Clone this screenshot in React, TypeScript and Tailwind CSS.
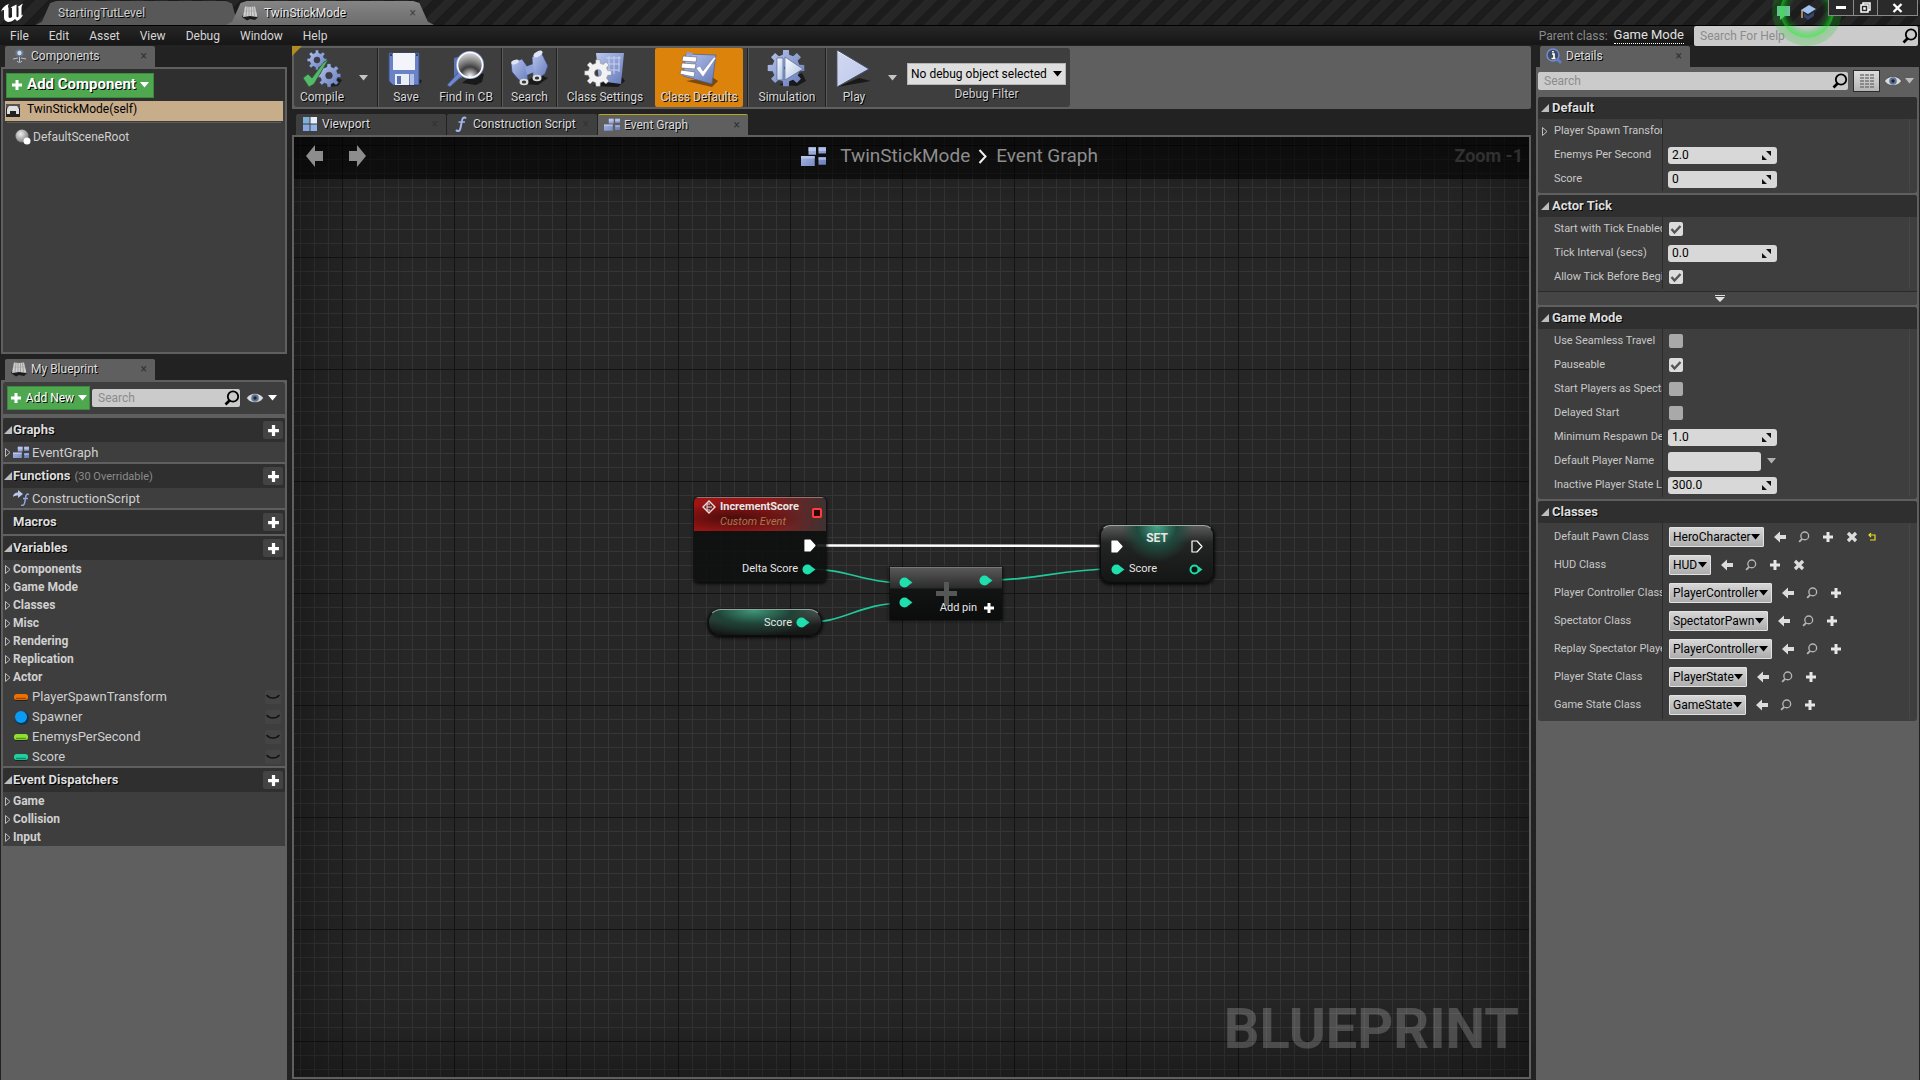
import { useState } from "react";
import type { ReactNode } from "react";

const SHADOW = "[text-shadow:1px_1px_0_#000]";

/* ---------- Icons ---------- */

function gearPath(cx: number, cy: number, r: number, teeth = 8, hole = 0.38) {
  const points: string[] = [];
  const step = (Math.PI * 2) / teeth;
  for (let i = 0; i < teeth; i++) {
    const a = i * step;
    [
      [-0.3, 0.74],
      [-0.2, 1],
      [0.2, 1],
      [0.3, 0.74],
    ].forEach(([k, m]) => {
      points.push(`${(cx + Math.cos(a + k * step) * r * m).toFixed(2)} ${(cy + Math.sin(a + k * step) * r * m).toFixed(2)}`);
    });
  }
  const h = r * hole;
  return `M${points.join("L")}ZM${cx - h} ${cy}a${h} ${h} 0 1 0 ${h * 2} 0a${h} ${h} 0 1 0 ${-h * 2} 0Z`;
}

function Gradients() {
  return (
    <svg className="absolute size-0" aria-hidden="true">
      <defs>
        <linearGradient id="steel" x1="0" y1="0" x2="1" y2="1">
          <stop offset="0" stopColor="#b9c6ee" />
          <stop offset="1" stopColor="#6479b8" />
        </linearGradient>
        <linearGradient id="pale" x1="0" y1="0" x2="1" y2="1">
          <stop offset="0" stopColor="#ffffff" />
          <stop offset="1" stopColor="#a9c0dd" />
        </linearGradient>
        <radialGradient id="lens" cx="0.5" cy="0.95" r="0.95">
          <stop offset="0" stopColor="#fff" />
          <stop offset="0.4" stopColor="#3f3f3f" />
          <stop offset="0.55" stopColor="#6b6b6b" />
          <stop offset="1" stopColor="#e2e2e2" />
        </radialGradient>
        <radialGradient id="ball" cx="0.4" cy="0.35" r="0.7">
          <stop offset="0" stopColor="#eee" />
          <stop offset="1" stopColor="#777" />
        </radialGradient>
      </defs>
    </svg>
  );
}

function CompileIcon() {
  return (
    <svg width="40" height="38" viewBox="0 0 40 38">
      <path d="M24 37l12-1 4-6-6-3z" fill="#1b1b1b" />
      <path d={gearPath(15, 10, 10, 8, 0.3)} fill="url(#steel)" fillRule="evenodd" stroke="#2a3352" strokeWidth="0.5" />
      <path d={gearPath(27, 25.5, 12, 8, 0.28)} fill="url(#steel)" fillRule="evenodd" stroke="#2a3352" strokeWidth="0.5" />
      <path d="M1 28l5-4 4 4L22 12l4-2L12 34l-5 3z" fill="#55b96a" stroke="#2b5a35" strokeWidth="0.8" />
    </svg>
  );
}

function SaveIcon() {
  return (
    <svg width="36" height="38" viewBox="0 0 36 38">
      <path d="M6 36h24l4-5-4-3z" fill="#191919" />
      <path d="M1 3h30v32H5l-4-4z" fill="#6a83c6" stroke="#3d4f85" />
      <path d="M5 3h22v17H5z" fill="#f4f5fa" />
      <circle cx="3" cy="5" r="1" fill="#233" />
      <circle cx="29" cy="5" r="1" fill="#233" />
      <path d="M7 24h14v11H7z" fill="#eceef5" />
      <path d="M9 26h4v8H9z" fill="#5a72b5" />
      <path d="M22 24h4v11h-4z" fill="#b7c2e2" />
    </svg>
  );
}

function FindIcon() {
  return (
    <svg width="40" height="38" viewBox="0 0 40 38">
      <path d="M16 33l14 2 6-3 2-8-8-2z" fill="#191919" />
      <path d="M8 8l8-2v22l-8 1z" fill="#5e74b4" />
      <path d="M1 35l12-13 4 3L4 37z" fill="#6d86cc" stroke="#39497c" strokeWidth="0.7" />
      <circle cx="24" cy="15" r="13" fill="url(#lens)" stroke="#93a6dd" strokeWidth="2" />
      <circle cx="24" cy="15" r="12.5" fill="none" stroke="#fff" strokeWidth="1.5" />
    </svg>
  );
}

function BinocularsIcon() {
  return (
    <svg width="40" height="38" viewBox="0 0 40 38">
      <path d="M12 34l16 1 10-7-10-4z" fill="#191919" />
      <path d="M1 13l11-4 5 7 1 15-5 2-5-4-6-7z" fill="url(#steel)" stroke="#33436f" strokeWidth="0.7" />
      <path d="M22 7l9-5 7 14-3 8-8 5-4-2z" fill="url(#steel)" stroke="#33436f" strokeWidth="0.7" />
      <path d="M15 17l8-3 1 8-7 3z" fill="#8ea2da" />
      <ellipse cx="5" cy="12" rx="4" ry="2" fill="#dfe5f7" transform="rotate(-20 5 12)" />
      <ellipse cx="28" cy="4" rx="5" ry="2.5" fill="#dfe5f7" transform="rotate(-28 28 4)" />
      <ellipse cx="14" cy="32" rx="4.5" ry="3.2" fill="#ddd" />
      <ellipse cx="27" cy="28" rx="4.5" ry="3.2" fill="#ddd" />
      <ellipse cx="14" cy="32" rx="2.2" ry="1.6" fill="#333" />
      <ellipse cx="27" cy="28" rx="2.2" ry="1.6" fill="#333" />
    </svg>
  );
}

function ClassSettingsIcon() {
  return (
    <svg width="42" height="38" viewBox="0 0 42 38">
      <path d="M8 36l26 1 7-6-4-5z" fill="#191919" />
      <path d="M12 3h28l-3 31-22-3z" fill="url(#steel)" />
      <path d="M22 8h15M21 14h15M22 20h13M25 6v18M30 6v18M35 6v16" stroke="#c7d2f1" strokeWidth="1" fill="none" />
      <path d={gearPath(14, 23, 13.5, 8, 0.26)} fill="#f2f2f5" fillRule="evenodd" stroke="#888" strokeWidth="0.5" />
    </svg>
  );
}

function ClassDefaultsIcon() {
  return (
    <svg width="42" height="38" viewBox="0 0 42 38">
      <path d="M8 31l26 6 6-6-6-4z" fill="#7a4a08" />
      <path d="M8 4l30 1-4 29L5 26z" fill="url(#steel)" stroke="#4a5c94" strokeWidth="0.7" />
      <path d="M9 2l6 1-1 3-6-1z" fill="#8da0d8" />
      <path d="M5 6l14 1-1 5-14-1zM4 13l14 1-1 5-14-1zM3 20l14 2-1 5-14-3z" fill="#fff" stroke="#5d5d6d" strokeWidth="0.6" />
      <path d="M18 18l4-2 3 5L36 7l2 1-13 19z" fill="#fff" stroke="#6d7ba9" strokeWidth="0.5" />
    </svg>
  );
}

function SimulationIcon() {
  return (
    <svg width="40" height="38" viewBox="0 0 40 38">
      <path d="M12 35l18 1 9-5-4-8z" fill="#191919" />
      <path d={gearPath(19, 18, 18.5, 8, 0.1)} fill="url(#steel)" fillRule="evenodd" />
      <path d="M10 8h6v22h-6z" fill="url(#pale)" stroke="#55669a" strokeWidth="0.7" />
      <path d="M18 7l18 12-18 11z" fill="url(#pale)" stroke="#55669a" strokeWidth="0.7" />
    </svg>
  );
}

function PlayIcon() {
  return (
    <svg width="36" height="40" viewBox="0 0 36 40">
      <path d="M1 38l34-6-12-3z" fill="#191919" />
      <path d="M1 1l32 19L1 38z" fill="url(#pale)" stroke="#46506e" />
      <path d="M2 3l29 17L2 36z" fill="#c3cbee" opacity="0.75" />
    </svg>
  );
}

function Caret({ className = "text-white" }: { className?: string }) {
  return (
    <svg width="9" height="6" viewBox="0 0 9 6" className={`shrink-0 ${className}`} aria-hidden="true">
      <path d="M0 0h9L4.500 5.500z" fill="currentColor" />
    </svg>
  );
}

function Plus({ size = 12, className = "text-white" }: { size?: number; className?: string }) {
  return (
    <svg width={size} height={size} viewBox="0 0 12 12" className={`shrink-0 ${className}`} aria-hidden="true">
      <path d="M4.500 1h3v3.500H11v3H7.500V11h-3V7.500H1v-3h3.500z" fill="currentColor" />
    </svg>
  );
}

function SearchGlyph({ size = 16, className = "text-black" }: { size?: number; className?: string }) {
  return (
    <svg width={size} height={size} viewBox="0 0 16 16" className={className} aria-hidden="true">
      <circle cx="9" cy="6.500" r="5.200" fill="none" stroke="currentColor" strokeWidth="1.800" />
      <path d="M5.500 10.500L1.500 14.500" stroke="currentColor" strokeWidth="2.600" />
    </svg>
  );
}

function Eye() {
  return (
    <svg width="18" height="12" viewBox="0 0 18 12" aria-hidden="true">
      <path d="M0.500 6C4 0 14 0 17.500 6 14 12 4 12 0.500 6z" fill="#dcdcdc" stroke="#222" strokeWidth="0.5" />
      <circle cx="9" cy="6" r="3.800" fill="#5d7596" />
      <circle cx="9" cy="6" r="1.700" fill="#1b2737" />
    </svg>
  );
}

function GraphIcon({ width = 16 }: { width?: number }) {
  return (
    <svg width={width} height={width * 0.8} viewBox="0 0 20 16" aria-hidden="true">
      <path d="M6 1h6v6H6zM14 1h6v5h-6zM0 8h11v8H0zM14 9h6v6h-6z" fill="url(#steel)" />
      <path d="M6 1h6v3H6zM14 1h6v3h-6zM0 8h11v2H0zM14 9h6v2h-6z" fill="#c9d3f4" opacity="0.6" />
    </svg>
  );
}

function ViewportIcon() {
  return (
    <svg width="14" height="14" viewBox="0 0 14 14" aria-hidden="true">
      <path d="M0 0h6.500v6.500H0z" fill="#7fb0d8" />
      <path d="M7.500 0H14v6.500H7.500z" fill="#e6f0f8" />
      <path d="M0 7.500h6.500V14H0z" fill="#88a7e2" />
      <path d="M7.500 7.500H14V14H7.500z" fill="#8fb3e6" />
    </svg>
  );
}

function FunctionIcon() {
  return (
    <svg width="12" height="16" viewBox="0 0 12 16" aria-hidden="true">
      <path d="M11 2.500C9.500 0.500 7.500 1.500 7 4.500L5.500 12C5 15 3 16 1 14" fill="none" stroke="#a3b8f0" strokeWidth="1.900" />
      <path d="M3.500 6h6.500" stroke="#a3b8f0" strokeWidth="1.400" />
    </svg>
  );
}

function BookIcon() {
  return (
    <svg width="16" height="16" viewBox="0 0 16 16" aria-hidden="true">
      <path d="M0 12l1-2h14l1 2-3 3-5-1-3 1.500z" fill="#1c1c1c" />
      <path d="M3 1.500L8 2l5-0.500L15.500 12 8 11 1 12z" fill="#cfcfcf" />
      <path d="M5 2L4 11M7 2v9M9.500 2v9M11.500 2l1 9" stroke="#8a8a8a" strokeWidth="0.700" />
      <path d="M2 6h12" stroke="#a5a5a5" strokeWidth="0.600" />
    </svg>
  );
}

function ComponentsIcon() {
  return (
    <svg width="15" height="14" viewBox="0 0 15 14" aria-hidden="true">
      <path d="M7.500 0l4 2v4l-4 2-4-2V2z" fill="#64799a" />
      <circle cx="7.500" cy="4" r="2.200" fill="#d5dbe4" />
      <path d="M7.500 8v5M1 10l5-1M14 10L9 9M5 12l2.500 2L10 12" stroke="#b9c2d0" fill="none" />
    </svg>
  );
}

function DetailsIcon() {
  return (
    <svg width="16" height="16" viewBox="0 0 16 16" aria-hidden="true">
      <circle cx="7" cy="7" r="6" fill="#414a5c" stroke="#6f8fd8" strokeWidth="1.500" />
      <path d="M11 11l4 4" stroke="#5a7fd4" strokeWidth="2.500" />
      <path d="M6 6h2v4.500M5.500 10.500h4M7 3v1.600" stroke="#fff" strokeWidth="1.700" fill="none" />
    </svg>
  );
}

function NavArrow({ flip = false }: { flip?: boolean }) {
  return (
    <svg width="18" height="24" viewBox="0 0 18 24" className={flip ? "-scale-x-100" : ""} aria-hidden="true">
      <path d="M0 12L9 1v6h8v10H9v6z" fill="#8d8d8d" />
    </svg>
  );
}

function Disclosure({ open = false }: { open?: boolean }) {
  return open ? (
    <svg width="8" height="8" viewBox="0 0 8 8" aria-hidden="true">
      <path d="M8 0v8H0z" fill="#bdbdbd" />
    </svg>
  ) : (
    <svg width="6" height="9" viewBox="0 0 6 9" aria-hidden="true">
      <path d="M0.500 0.500v8l4.500-4z" fill="none" stroke="#bdbdbd" />
    </svg>
  );
}

/* ---------- Window chrome ---------- */

function UnrealLogo() {
  return (
    <svg width="24" height="20" viewBox="0 0 24 20" aria-label="Unreal Engine">
      <path
        d="M1 9C2 5 5 2 9 1 7.500 3 8 4 8.500 5v8.500c0 1.500 1.500 2 3.500 0.500V5.500C12 4.500 11 4.500 10.500 4.500L16.500 1.500V13c0 1.500 1 1.500 2 0.500V5c0-1-0.500-1-1-1C19 3 20.500 2 23 0.500 21.500 3 21.500 4 21.500 6v6.500l1.500-1c-1 3-3 5-6 6.500l-2-2c-2 2-4 3-7 3-3-1-4-2-4-5V7.500C4 6.500 2 7 1 9z"
        fill="#fff"
      />
    </svg>
  );
}

function TitleTab({ label, active = false }: { label: string; active?: boolean }) {
  return (
    <button
      className={
        active
          ? "relative -ml-3 flex h-6 w-[208px] items-center bg-gradient-to-b from-[#858585] to-[#6c6c6c] pl-4 text-[#e8e8e8] [clip-path:polygon(0_100%,3%_85%,7%_8%,10%_0,90%_0,93%_8%,97%_85%,100%_100%)]"
          : "flex h-6 w-[202px] items-center bg-[#585858] pl-[22px] text-[#cfcfcf] [clip-path:polygon(0_100%,3%_85%,7%_8%,10%_0,94%_0,97%_10%,100%_100%)]"
      }
    >
      {active && <BookIcon />}
      <span className={`${SHADOW} ${active ? "ml-1.5" : ""}`}>{label}</span>
      {active && <span className="ml-auto mr-[18px] text-[#444]">×</span>}
    </button>
  );
}

function TitleBar() {
  return (
    <div className="relative flex h-[25px] items-end bg-[repeating-linear-gradient(135deg,#1c1c1c_0px,#1c1c1c_8px,#262626_8px,#262626_17px)] text-xs">
      <div className="flex h-full w-[36px] items-center">
        <UnrealLogo />
      </div>
      <TitleTab label="StartingTutLevel" />
      <TitleTab label="TwinStickMode" active />
      <div className="ml-auto flex h-full items-start">
        <svg width="48" height="18" viewBox="0 0 48 18" className="mr-1 mt-1" aria-hidden="true">
          <path d="M1 2h13v10H9l-5 4v-4H1z" fill="#7fbfae" />
          <path d="M33 1l7 4-8 5-7-4z" fill="#9dc0ee" />
          <path d="M28 9l4 3 6-4v4l-6 4-4-3z" fill="#33466e" />
          <path d="M26 6v8" stroke="#d0a87c" strokeWidth="1.500" />
        </svg>
        <button aria-label="Minimize" className="relative z-20 flex h-4 w-[26px] items-center justify-center border border-t-0 border-[#8a8a8a] bg-[#2a2a2a]">
          <span className="h-[3px] w-2.5 bg-white" />
        </button>
        <button aria-label="Restore" className="flex h-4 w-[24px] items-center justify-center border border-l-0 border-t-0 border-[#8a8a8a] bg-[#2a2a2a]">
          <svg width="11" height="11" viewBox="0 0 11 11">
            <path d="M3 3V1h7v7H8M1 3h7v7H1zM4 6h1v1H4z" fill="none" stroke="#fff" strokeWidth="1.500" />
          </svg>
        </button>
        <button aria-label="Close" className="mr-[2px] flex h-4 w-[40px] items-center justify-center border border-l-0 border-t-0 border-[#8a8a8a] bg-[#2a2a2a]">
          <svg width="11" height="10" viewBox="0 0 11 10">
            <path d="M1.500 1l8 8M9.500 1l-8 8" stroke="#fff" strokeWidth="2.400" />
          </svg>
        </button>
      </div>
      <div className="pointer-events-none absolute right-[78px] top-[-24px] z-10 size-[70px] rounded-full bg-[radial-gradient(circle_closest-side,transparent_0,transparent_45%,rgba(0,200,20,0.25)_60%,rgba(20,240,30,0.6)_74%,rgba(20,200,30,0.25)_78%,rgba(20,200,30,0.2)_100%)] [clip-path:inset(24px_0_0_0)]" />
    </div>
  );
}

const MENUS = ["File", "Edit", "Asset", "View", "Debug", "Window", "Help"];

function MenuBar() {
  return (
    <div className="flex h-5 items-center border-t border-black bg-gradient-to-b from-[#262626] to-[#161616] text-xs text-[#d6d6d6]">
      <nav className="flex gap-5 pl-2.5">
        {MENUS.map((menu) => (
          <button key={menu}>{menu}</button>
        ))}
      </nav>
      <div className="ml-auto mr-2.5 flex items-center gap-1.5">
        <span className="text-[#8b8b8b]">Parent class:</span>
        <a href="#game-mode" className="border-b border-dotted border-white text-[13px] leading-4 text-[#e0e0e0]">
          Game Mode
        </a>
      </div>
      <SearchBox label="Search For Help" className="mr-[2px] h-5 w-[224px]" />
    </div>
  );
}

/* ---------- Shared pieces ---------- */

function SearchBox({ label, className }: { label: string; className: string }) {
  return (
    <div className={`relative ${className}`}>
      <input
        type="text"
        aria-label={label}
        placeholder={label}
        className="block h-full w-full rounded-[2px] bg-[#cbcbcb] pl-1.5 pr-5 text-xs text-black outline-none placeholder:text-[#8c8c8c]"
      />
      <span className="absolute right-0 top-1/2 -translate-y-1/2">
        <SearchGlyph />
      </span>
    </div>
  );
}

function PanelTab({ icon, label, tone = "panel" }: { icon: ReactNode; label: string; tone?: "panel" | "active" | "idle" }) {
  const tones = {
    panel: "bg-[#5f5f5f]",
    active: "bg-[#5f5f5f] border-t border-[#b5a51f]",
    idle: "bg-[#3f3f3f]",
  };
  return (
    <button className={`flex h-[21px] w-[150px] items-center rounded-t-[2px] pb-px pl-1.5 pr-2 text-xs text-[#dcdcdc] ${tones[tone]}`}>
      <span className="flex w-4 justify-center">{icon}</span>
      <span className={`ml-1 whitespace-nowrap ${SHADOW}`}>{label}</span>
      <span className="ml-auto text-[#333]">×</span>
    </button>
  );
}

/* ---------- Left column ---------- */

function ComponentsPanel() {
  return (
    <section>
      <div className="pl-1">
        <PanelTab icon={<ComponentsIcon />} label="Components" />
      </div>
      <div className="h-[287px] border-2 border-[#5f5f5f] bg-[#3e3e3e] text-xs">
        <div className="flex h-8 items-center bg-[#2f2f2f] pl-[3px]">
          <button className="flex h-[25px] w-[148px] items-center justify-center gap-1 border border-[#3c8a3e] bg-[#4fa850] text-[15px] font-bold text-white">
            <Plus />
            <span className={SHADOW}>Add Component</span>
            <Caret />
          </button>
        </div>
        <div className="mx-0.5 flex h-5 items-center gap-1.5 bg-[#c8ad8a] pb-1 text-black">
          <svg width="16" height="14" viewBox="0 0 16 14" className="mt-1" aria-hidden="true">
            <path d="M1 0h14v13H1z" fill="#555" />
            <path d="M1 4h14v9H1z" fill="#222" />
            <path d="M4 2h8l2 3v5h-3V7H5v3H2V5z" fill="#e0e0e0" />
          </svg>
          TwinStickMode(self)
        </div>
        <div className="mx-1 mt-px border-t border-[#595959]" />
        <div className="mt-1 flex h-5 items-center gap-0.5 pl-3 text-[#d0d0d0]">
          <svg width="16" height="16" viewBox="0 0 16 16" aria-hidden="true">
            <circle cx="7" cy="7" r="6.500" fill="url(#ball)" />
            <circle cx="12" cy="12" r="3.500" fill="#fff" />
          </svg>
          DefaultSceneRoot
        </div>
      </div>
    </section>
  );
}

function ListSection({ title, note, open = true, children }: { title: string; note?: string; open?: boolean; children?: ReactNode }) {
  return (
    <div className="mb-0.5 bg-[#3e3e3e]">
      <div className="flex h-6 items-center rounded-t-[3px] bg-[#2f2f2f] pr-0.5">
        <span className="w-2.5 pl-px">{open && <Disclosure open />}</span>
        <span className={`font-bold text-[#dedede] ${SHADOW}`}>{title}</span>
        {note && <span className="ml-1 pt-0.5 text-[11px] text-[#8b8b8b]">{note}</span>}
        <button aria-label={`Add to ${title}`} className="ml-auto flex h-[18px] w-5 items-center justify-center rounded-[2px] bg-[#434343]">
          <Plus size={13} />
        </button>
      </div>
      {children}
    </div>
  );
}

function CategoryRow({ label }: { label: string }) {
  return (
    <div className="flex h-[18px] items-center text-xs font-bold text-[#d0d0d0]">
      <span className="w-2.5 pl-0.5">
        <Disclosure />
      </span>
      {label}
    </div>
  );
}

const VARIABLES = [
  { name: "PlayerSpawnTransform", color: "#f07000" },
  { name: "Spawner", color: "#0b9bf4", round: true },
  { name: "EnemysPerSecond", color: "#90e030" },
  { name: "Score", color: "#1fd0a0" },
];

function VariableRow({ name, color, round = false }: { name: string; color: string; round?: boolean }) {
  return (
    <div className="flex h-5 items-center pr-1 pt-px text-[#d0d0d0]">
      <svg width="16" height="16" viewBox="0 0 16 16" className="ml-[11px] mr-0.5" aria-hidden="true">
        {round ? (
          <>
            <circle cx="8" cy="9" r="7" fill="#123352" />
            <circle cx="7" cy="8" r="6" fill={color} />
          </>
        ) : (
          <>
            <rect x="0" y="5" width="14" height="7" rx="3" fill="#222" />
            <rect x="0" y="5" width="14" height="6" rx="2.500" fill={color} />
            <path d="M2 9.500h10" stroke="#000" opacity="0.35" strokeWidth="1.500" />
          </>
        )}
      </svg>
      {name}
      <button aria-label={`Toggle ${name}`} className="ml-auto flex h-3.5 w-4 items-center justify-center rounded-[2px] bg-[#444]">
        <svg width="14" height="6" viewBox="0 0 14 6">
          <path d="M0.500 1C4 5 10 5 13.500 1" fill="none" stroke="#111" strokeWidth="1.300" />
        </svg>
      </button>
    </div>
  );
}

function MyBlueprintPanel() {
  return (
    <section className="mt-[5px] flex flex-1 flex-col">
      <div className="pl-1">
        <PanelTab icon={<BookIcon />} label="My Blueprint" />
      </div>
      <div className="flex-1 bg-[#5f5f5f] p-0.5">
        <div className="mb-1 flex h-8 items-center rounded-t-[3px] bg-[#3e3e3e] pl-1">
          <button className="flex h-6 w-[83px] shrink-0 items-center justify-center gap-1 border border-[#3c8a3e] bg-[#4fa850] text-xs text-white">
            <Plus />
            <span className={`whitespace-nowrap ${SHADOW}`}>Add New</span>
            <Caret />
          </button>
          <SearchBox label="Search" className="ml-0.5 mr-1.5 h-[18px] flex-1" />
          <button aria-label="View options" className="mr-2 flex items-center gap-1">
            <Eye />
            <Caret />
          </button>
        </div>
        <ListSection title="Graphs">
          <div className="flex h-5 items-center text-[#d0d0d0]">
            <span className="w-2.5 pl-0.5">
              <Disclosure />
            </span>
            <GraphIcon />
            <span className="ml-[3px] pt-px">EventGraph</span>
          </div>
        </ListSection>
        <ListSection title="Functions" note="(30 Overridable)">
          <div className="flex h-5 items-center pl-2.5 text-[#d0d0d0]">
            <svg width="16" height="16" viewBox="0 0 16 16" aria-hidden="true">
              <path d="M0 7c0-3 2-4.500 5-4.500V0l5 4-5 4V5.500C3 5.500 1 6 0 7z" fill="#b9c8ec" />
              <path d="M16 4.500c-2-1-3 0-3.400 3l-0.800 4.500c-0.400 3-1.800 4-3.500 3M10 8.500h5" fill="none" stroke="#8fa6e0" strokeWidth="1.500" />
            </svg>
            <span className="ml-[3px] pt-px">ConstructionScript</span>
          </div>
        </ListSection>
        <ListSection title="Macros" open={false} />
        <ListSection title="Variables">
          {["Components", "Game Mode", "Classes", "Misc", "Rendering", "Replication", "Actor"].map((label) => (
            <CategoryRow key={label} label={label} />
          ))}
          {VARIABLES.map((variable) => (
            <VariableRow key={variable.name} {...variable} />
          ))}
        </ListSection>
        <ListSection title="Event Dispatchers">
          {["Game", "Collision", "Input"].map((label) => (
            <CategoryRow key={label} label={label} />
          ))}
        </ListSection>
      </div>
    </section>
  );
}

/* ---------- Toolbar ---------- */

function ToolButton({ icon, label, width, active = false }: { icon: ReactNode; label: string; width: string; active?: boolean }) {
  return (
    <button className={`flex flex-col items-center text-xs text-[#d8d8d8] ${width} ${active ? "rounded-[2px] bg-[#dc830c]" : ""}`}>
      <span className="flex h-10 items-center pt-0.5">{icon}</span>
      <span className={`whitespace-nowrap leading-[18px] ${SHADOW}`}>{label}</span>
    </button>
  );
}

function ToolSeparator() {
  return <div className="mx-px w-0.5 border-l border-[#1f1f1f] bg-[#5a5a5a]" />;
}

function Toolbar() {
  return (
    <div className="h-[63px] rounded-r-[2px] bg-[#5f5f5f] p-0.5">
      <div className="relative flex h-full w-[776px] rounded-[3px] bg-[#3e3e3e]">
        <div className="absolute -left-0.5 -top-0.5 size-2.5 bg-[#b08d24] [clip-path:polygon(0_0,100%_0,0_100%)]" />
        <ToolButton icon={<CompileIcon />} label="Compile" width="w-[56px]" />
        <button aria-label="Compile options" className="flex w-[26px] items-center justify-center">
          <Caret className="text-[#c4c4c4]" />
        </button>
        <ToolSeparator />
        <ToolButton icon={<SaveIcon />} label="Save" width="w-[52px]" />
        <ToolButton icon={<FindIcon />} label="Find in CB" width="w-[68px]" />
        <ToolSeparator />
        <ToolButton icon={<BinocularsIcon />} label="Search" width="w-[51px]" />
        <ToolSeparator />
        <ToolButton icon={<ClassSettingsIcon />} label="Class Settings" width="w-[92px]" />
        <div className="w-1" />
        <ToolButton icon={<ClassDefaultsIcon />} label="Class Defaults" width="w-[88px]" active />
        <div className="w-[3px]" />
        <ToolSeparator />
        <ToolButton icon={<SimulationIcon />} label="Simulation" width="w-[74px]" />
        <ToolSeparator />
        <ToolButton icon={<PlayIcon />} label="Play" width="w-[52px]" />
        <button aria-label="Play options" className="flex w-[24px] items-center justify-center">
          <Caret className="text-[#c4c4c4]" />
        </button>
        <div className="ml-auto mr-1 flex flex-col items-center pt-[15px] text-xs">
          <Dropdown id="debug-filter" value="No debug object selected" className="h-[22px] w-[159px] border-[#b5b5b5] bg-[#dedede]" />
          <label htmlFor="debug-filter" className={`leading-[18px] text-[#cfcfcf] ${SHADOW}`}>
            Debug Filter
          </label>
        </div>
      </div>
    </div>
  );
}

function Dropdown({ id, value, className }: { id: string; value: string; className: string }) {
  return (
    <div className="relative">
      <select id={id} className={`block appearance-none border pl-[3px] pr-3 text-black outline-none ${className}`} defaultValue={value}>
        <option>{value}</option>
      </select>
      <span className="pointer-events-none absolute right-1 top-1/2 -translate-y-1/2">
        <Caret className="text-black" />
      </span>
    </div>
  );
}

/* ---------- Graph ---------- */

function ExecPin({ filled = true }: { filled?: boolean }) {
  return (
    <svg width="12" height="13" viewBox="0 0 12 13" aria-hidden="true">
      <path d="M1 1h5l5 5.500-5 5.500H1z" fill={filled ? "#fff" : "none"} stroke="#fff" strokeWidth="1.200" strokeLinejoin="round" />
    </svg>
  );
}

function DataPin({ filled = true }: { filled?: boolean }) {
  return (
    <svg width="14" height="11" viewBox="0 0 14 11" aria-hidden="true">
      <path d="M9.500 2.500l4 3-4 3z" fill="#1fd9a8" />
      <circle cx="5.500" cy="5.500" r={filled ? 5 : 4} fill={filled ? "#1fe0ac" : "#0c1412"} stroke="#1fd9a8" strokeWidth={filled ? 0 : 2} />
    </svg>
  );
}

const NODE = "absolute text-[11px] leading-4 text-[#e6e6e6] shadow-[0_1px_3px_1px_rgba(0,0,0,0.8)]";

function BlueprintGraph() {
  return (
    <div className="relative flex-1 overflow-hidden border-2 border-[#5f5f5f] bg-[#262626]">
      <div className="absolute inset-0 bg-[linear-gradient(to_right,#141414_1px,transparent_1px),linear-gradient(to_bottom,#141414_1px,transparent_1px),linear-gradient(to_right,#353535_1px,transparent_1px),linear-gradient(to_bottom,#353535_1px,transparent_1px)] bg-[size:112px_112px,112px_112px,14px_14px,14px_14px] bg-[position:48px_8px,48px_8px,6px_8px,6px_8px]" />
      <div className="absolute inset-0 shadow-[inset_0_0_90px_rgba(0,0,0,0.55)]" />

      {/* Wires */}
      <svg className="absolute inset-0 h-full w-full" aria-hidden="true">
        <path d="M523 408.500L823 409" stroke="#fff" strokeWidth="2.500" fill="none" />
        <g stroke="#20c99a" strokeWidth="1.600" fill="none">
          <path d="M514 432C555 432 568 446 612 446" />
          <path d="M506 486C555 486 562 466 612 466" />
          <path d="M698 443C745 443 765 432 821 432" />
        </g>
      </svg>

      {/* IncrementScore event */}
      <div className={`${NODE} left-[400px] top-[360px] h-[85px] w-[132px] overflow-hidden rounded-[5px] bg-[#0e100f]/90`}>
        <div className="relative h-[34px] border-t border-[#9a7070] bg-[radial-gradient(ellipse_at_30%_60%,#4a0c0c_0,transparent_55%),linear-gradient(to_right,#a01414_0,#8f1a1a_55%,#3d3232_100%)] pl-[26px] pt-px">
          <svg width="14" height="14" viewBox="0 0 14 14" className="absolute left-2 top-0.5" aria-hidden="true">
            <path d="M7 1l6 6-6 6-6-6z" fill="#6b2020" stroke="#f0dede" strokeWidth="1.400" />
            <path d="M8 4H5v6h3M5 7h5" stroke="#f0dede" fill="none" />
          </svg>
          <div className="font-bold">IncrementScore</div>
          <div className="leading-[14px] italic text-[#a8784f]">Custom Event</div>
          <span className="absolute right-1 top-2.5 size-2.5 rounded-[2px] border-2 border-[#ff3b3b] bg-[#2a0505]" />
        </div>
        <div className="flex h-7 items-center justify-end pr-2.5">
          <ExecPin />
        </div>
        <div className="flex h-5 items-center justify-end gap-1 pr-2.5">
          Delta Score
          <DataPin />
        </div>
      </div>

      {/* Score getter */}
      <div
        className={`${NODE} left-[414px] top-[472px] flex h-[27px] w-[114px] items-center justify-end gap-1 rounded-[13px] border border-[#0c0c0c] border-t-[#8fa39c] bg-[radial-gradient(ellipse_at_40%_0%,#3f9a7c_0,#1f4237_40%,transparent_75%),linear-gradient(to_bottom,#5a5a5a_0,#1c1e1d_60%,#141615_100%)] pr-[11px]`}
      >
        Score
        <DataPin />
      </div>

      {/* Add node */}
      <div className={`${NODE} left-[596px] top-[430px] h-[52px] w-[112px] border-t border-[#777] bg-[linear-gradient(to_bottom,#585858_0,#2c2d2c_38%,#121413_42%,#0b0c0c_100%)]`}>
        <span className="absolute left-[46px] top-3.5">
          <svg width="21" height="24" viewBox="0 0 21 24" aria-hidden="true">
            <path d="M8 0h5v9h8v5h-8v10H8V14H0V9h8z" fill="#565856" />
          </svg>
        </span>
        <div className="flex justify-between px-[9px] pt-[7px]">
          <div className="mt-0.5 flex flex-col gap-[9px]">
            <DataPin />
            <DataPin />
          </div>
          <DataPin />
        </div>
        <button className="absolute bottom-[3px] right-[7px] flex items-center gap-1.5">
          Add pin
          <Plus />
        </button>
      </div>

      {/* Score setter */}
      <div
        className={`${NODE} left-[806px] top-[388px] h-[58px] w-[114px] rounded-[10px] border border-[#0c0c0c] border-t-[#9aaaa4] bg-[radial-gradient(ellipse_at_50%_0%,#46a688_0,#1f4a3d_25%,transparent_45%),linear-gradient(to_bottom,#5a5a5a_0,#232524_30%,#141615_100%)]`}
      >
        <div className="pt-1 text-center text-xs leading-4 font-bold">SET</div>
        <div className="-mt-1.5 flex justify-between px-2.5">
          <ExecPin />
          <ExecPin filled={false} />
        </div>
        <div className="mt-2 flex items-center gap-1 px-2.5">
          <DataPin />
          Score
          <span className="ml-auto">
            <DataPin filled={false} />
          </span>
        </div>
      </div>

      {/* Breadcrumb */}
      <div className="absolute inset-x-0 top-0 flex h-[42px] items-center justify-center bg-black/55 pb-1 text-[19px] text-[#8d8d8d]">
        <div className="absolute left-3 flex gap-6">
          <button aria-label="Back">
            <NavArrow />
          </button>
          <button aria-label="Forward">
            <NavArrow flip />
          </button>
        </div>
        <div className="flex items-center pl-[76px]">
          <GraphIcon width={25} />
          <button className="ml-3.5">TwinStickMode</button>
          <svg width="10" height="15" viewBox="0 0 10 15" className="mx-2" aria-hidden="true">
            <path d="M1.500 1l6 6.500-6 6.500" fill="none" stroke="#f0f0f0" strokeWidth="2" />
          </svg>
          <span>Event Graph</span>
        </div>
        <span className="absolute right-1.5 text-lg leading-5 font-bold text-[#313131]">Zoom -1</span>
      </div>

      <div className="pointer-events-none absolute bottom-3 right-2.5 text-[56px] font-bold leading-[72px] text-white/20">BLUEPRINT</div>
    </div>
  );
}

/* ---------- Details panel ---------- */

function DetailSection({ title, children }: { title: string; children: ReactNode }) {
  return (
    <div className="mb-0.5 rounded-[3px] bg-[#3e3e3e]">
      <div className="flex h-[22px] items-center rounded-t-[3px] bg-[#2f2f2f] pl-[3px]">
        <Disclosure open />
        <h3 className={`ml-[3px] font-bold text-[#dedede] ${SHADOW}`}>{title}</h3>
      </div>
      {children}
    </div>
  );
}

function DetailRow({ label, id, tall = false, expandable = false, children }: { label: string; id?: string; tall?: boolean; expandable?: boolean; children?: ReactNode }) {
  return (
    <div className={`flex items-stretch ${tall ? "h-7" : "h-6"}`}>
      <div className="flex w-[125px] shrink-0 items-center overflow-hidden border-r border-[#2b2b2b] text-[11px] text-[#c8c8c8]">
        <span className="w-4 shrink-0 pl-1">{expandable && <Disclosure />}</span>
        <label htmlFor={id} className="whitespace-nowrap">
          {label}
        </label>
      </div>
      <div className="mr-[7px] flex flex-1 items-center border-r border-[#474747] pl-[5px]">{children}</div>
    </div>
  );
}

function NumberRow({ label, value, id }: { label: string; value: string; id: string }) {
  return (
    <DetailRow label={label} id={id}>
      <div className="relative">
        <input id={id} type="text" defaultValue={value} className="block h-[17px] w-[109px] rounded-[3px] bg-[#d8d8d8] pl-1 text-xs text-black outline-none" />
        <svg width="9" height="9" viewBox="0 0 9 9" className="absolute right-1.5 top-1" aria-hidden="true">
          <path d="M4 0h5v5zM0 4v5h5z" fill="#111" />
        </svg>
      </div>
    </DetailRow>
  );
}

function CheckRow({ label, id, initial = false }: { label: string; id: string; initial?: boolean }) {
  const [checked, setChecked] = useState(initial);
  return (
    <DetailRow label={label} id={id}>
      <span className="relative ml-px size-3.5">
        <input
          id={id}
          type="checkbox"
          checked={checked}
          onChange={(e) => setChecked(e.target.checked)}
          className="block size-3.5 appearance-none rounded-[2px] bg-[#a9a9a9] checked:bg-[#dcdcdc]"
        />
        {checked && (
          <svg width="14" height="14" viewBox="0 0 14 14" className="pointer-events-none absolute inset-0" aria-hidden="true">
            <path d="M2.500 7l3 3.500 6-6.500" fill="none" stroke="#555" strokeWidth="2.400" />
          </svg>
        )}
      </span>
    </DetailRow>
  );
}

function ClassRow({ label, id, value, clear = false, reset = false }: { label: string; id: string; value: string; clear?: boolean; reset?: boolean }) {
  return (
    <DetailRow label={label} id={id} tall>
      <Dropdown id={id} value={value} className="ml-px h-5 rounded-[1px] border-[#e2e2e2] bg-gradient-to-b from-[#d6d6d6] to-[#adadad] text-xs" />
      <div className="ml-2.5 flex items-center gap-3 text-[#dcdcdc]">
        <button aria-label={`Use selected asset for ${label}`}>
          <svg width="12" height="12" viewBox="0 0 12 12">
            <path d="M0 6l6-5.500V4h6v4H6v3.500z" fill="currentColor" />
          </svg>
        </button>
        <button aria-label={`Browse to ${label}`}>
          <SearchGlyph size={12} className="text-[#b5b5b5]" />
        </button>
        <button aria-label={`Create ${label}`}>
          <Plus className="text-[#e6e6e6]" />
        </button>
        {clear && (
          <button aria-label={`Clear ${label}`}>
            <svg width="12" height="12" viewBox="0 0 12 12">
              <path d="M2 2l8 8M10 2l-8 8" stroke="currentColor" strokeWidth="3.200" />
            </svg>
          </button>
        )}
        {reset && (
          <button aria-label={`Reset ${label}`} className="-ml-0.5">
            <svg width="8" height="8" viewBox="0 0 8 8">
              <path d="M1 2h6v5H2M3 0L1 2l2 2" fill="none" stroke="#e8e020" strokeWidth="1.200" />
            </svg>
          </button>
        )}
      </div>
    </DetailRow>
  );
}

function DetailsPanel() {
  return (
    <aside className="flex w-[383px] shrink-0 flex-col">
      <div className="pl-1">
        <PanelTab icon={<DetailsIcon />} label="Details" />
      </div>
      <div className="flex-1 bg-[#5f5f5f] px-0.5 pt-[3px]">
        <div className="mb-[5px] flex h-[22px] items-center">
          <SearchBox label="Search" className="h-[18px] flex-1" />
          <button aria-label="Property matrix" className="ml-[5px] flex h-[22px] w-[27px] items-center justify-center border border-[#2c2c2c] bg-gradient-to-b from-[#dedede] to-[#b5b5b5]">
            <svg width="14" height="14" viewBox="0 0 14 14">
              <path d="M0 1h14M0 4h14M0 7h14M0 10h14M0 13h14" stroke="#777" strokeWidth="1.600" strokeDasharray="4 1" />
            </svg>
          </button>
          <button aria-label="View options" className="ml-1 mr-[3px] flex items-center gap-[3px]">
            <Eye />
            <Caret className="text-[#bdbdbd]" />
          </button>
        </div>

        <DetailSection title="Default">
          <DetailRow label="Player Spawn Transform" expandable />
          <NumberRow label="Enemys Per Second" value="2.0" id="enemys-per-second" />
          <div className="pb-0.5">
            <NumberRow label="Score" value="0" id="score" />
          </div>
        </DetailSection>

        <DetailSection title="Actor Tick">
          <CheckRow label="Start with Tick Enabled" id="start-tick" initial />
          <NumberRow label="Tick Interval (secs)" value="0.0" id="tick-interval" />
          <CheckRow label="Allow Tick Before Begin Play" id="tick-before" initial />
          <button aria-label="Show advanced" className="mt-0.5 flex h-[14px] w-full items-center justify-center rounded-b-[3px] border-t border-[#2b2b2b] bg-[#454545]">
            <svg width="10" height="7" viewBox="0 0 10 7" className="mr-4">
              <path d="M0 0h10v1H0zM0 2h10L5 7z" fill="#e0e0e0" />
            </svg>
          </button>
        </DetailSection>

        <DetailSection title="Game Mode">
          <CheckRow label="Use Seamless Travel" id="seamless" />
          <CheckRow label="Pauseable" id="pauseable" initial />
          <CheckRow label="Start Players as Spectators" id="spectators" />
          <CheckRow label="Delayed Start" id="delayed" />
          <NumberRow label="Minimum Respawn Delay" value="1.0" id="respawn" />
          <DetailRow label="Default Player Name" id="player-name">
            <input id="player-name" type="text" className="h-[19px] w-[93px] rounded-[3px] bg-[#d8d8d8] px-1 text-black outline-none" />
            <button aria-label="Name options" className="ml-1.5">
              <Caret className="text-[#b0b0b0]" />
            </button>
          </DetailRow>
          <div className="pb-0.5">
            <NumberRow label="Inactive Player State Life Span" value="300.0" id="inactive" />
          </div>
        </DetailSection>

        <DetailSection title="Classes">
          <ClassRow label="Default Pawn Class" id="pawn" value="HeroCharacter" clear reset />
          <ClassRow label="HUD Class" id="hud" value="HUD" clear />
          <ClassRow label="Player Controller Class" id="controller" value="PlayerController" />
          <ClassRow label="Spectator Class" id="spectator" value="SpectatorPawn" />
          <ClassRow label="Replay Spectator Player Controller Class" id="replay" value="PlayerController" />
          <ClassRow label="Player State Class" id="player-state" value="PlayerState" />
          <div className="pb-0.5">
            <ClassRow label="Game State Class" id="game-state" value="GameState" />
          </div>
        </DetailSection>
      </div>
    </aside>
  );
}

export default function App() {
  return (
    <div className="flex h-screen flex-col overflow-hidden bg-[#222] font-[Roboto,sans-serif] text-[13px] leading-4">
      <Gradients />
      <TitleBar />
      <MenuBar />
      <main className="flex min-h-0 flex-1 gap-[5px] px-px pt-px">
        <div className="flex w-[286px] shrink-0 flex-col">
          <ComponentsPanel />
          <MyBlueprintPanel />
        </div>
        <div className="flex min-w-0 flex-1 flex-col pb-px">
          <Toolbar />
          <div className="mt-[5px] flex gap-px pl-1">
            <PanelTab icon={<ViewportIcon />} label="Viewport" tone="idle" />
            <PanelTab icon={<FunctionIcon />} label="Construction Script" tone="idle" />
            <PanelTab icon={<GraphIcon />} label="Event Graph" tone="active" />
          </div>
          <BlueprintGraph />
        </div>
        <DetailsPanel />
      </main>
    </div>
  );
}
